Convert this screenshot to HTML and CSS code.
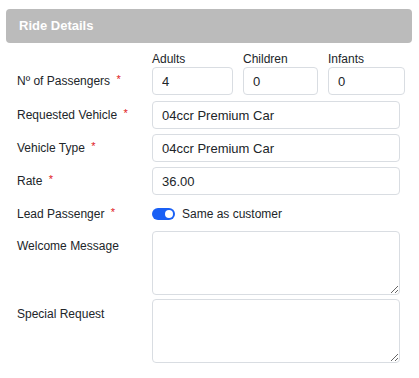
FILE: index.html
```html
<!DOCTYPE html>
<html lang="en">
<head>
    <meta charset="UTF-8">
    <title>Ride Details</title>
    <link rel="stylesheet" href="styles.css">
</head>
<body>
    <div class="panel">
        <div class="panel-header">Ride Details</div>
        <div class="form">
            <div class="row row-pax">
                <label class="field-label">Nº of Passengers <span class="req">*</span></label>
                <div class="pax">
                    <div class="pax-col">
                        <span class="pax-label">Adults</span>
                        <input class="input" type="text" value="4">
                    </div>
                    <div class="pax-col">
                        <span class="pax-label">Children</span>
                        <input class="input" type="text" value="0">
                    </div>
                    <div class="pax-col">
                        <span class="pax-label">Infants</span>
                        <input class="input" type="text" value="0">
                    </div>
                </div>
            </div>
            <div class="row">
                <label class="field-label">Requested Vehicle <span class="req">*</span></label>
                <input class="input" type="text" value="04ccr Premium Car">
            </div>
            <div class="row">
                <label class="field-label">Vehicle Type <span class="req">*</span></label>
                <input class="input" type="text" value="04ccr Premium Car">
            </div>
            <div class="row">
                <label class="field-label">Rate <span class="req">*</span></label>
                <input class="input" type="text" value="36.00">
            </div>
            <div class="row row-toggle">
                <label class="field-label">Lead Passenger <span class="req">*</span></label>
                <div class="toggle-wrap">
                    <span class="toggle"><span class="knob"></span></span>
                    <span>Same as customer</span>
                </div>
            </div>
            <div class="row row-top">
                <label class="field-label">Welcome Message</label>
                <textarea class="input textarea"></textarea>
            </div>
            <div class="row row-top">
                <label class="field-label">Special Request</label>
                <textarea class="input textarea"></textarea>
            </div>
        </div>
    </div>
</body>
</html>
```

FILE: styles.css
```css
body {
    margin: 0;
    padding: 9px 6px 0 6px;
    font-family: "Liberation Sans", Arial, sans-serif;
    font-size: 12px;
    color: #212529;
    background: #fff;
}
.panel {
    width: 406px;
}
.panel-header {
    background: #bbbbbb;
    color: #fff;
    font-weight: bold;
    font-size: 13px;
    height: 34px;
    line-height: 34px;
    padding-left: 13px;
    border-radius: 4px;
}
.form {
    padding: 9px 0 0 11px;
}
.row {
    display: grid;
    grid-template-columns: 135px 248px;
    align-items: center;
    margin-bottom: 5px;
}
.row-pax {
    align-items: end;
    margin-bottom: 6px;
}
.row-pax .field-label {
    height: 28px;
    line-height: 28px;
}
.row-top {
    align-items: start;
    margin-bottom: 4px;
}
.row-top .field-label {
    padding-top: 8px;
}
.field-label {
    white-space: nowrap;
}
.req {
    color: #e0161b;
    font-size: 11px;
    position: relative;
    top: -2px;
    margin-left: 3px;
}
.pax {
    display: grid;
    grid-template-columns: 81px 75px 77px;
    gap: 10px;
}
.pax-col {
    display: flex;
    flex-direction: column;
}
.pax-label {
    font-size: 12px;
    line-height: 14px;
    margin-bottom: 1px;
}
.input {
    box-sizing: border-box;
    height: 28px;
    width: 100%;
    border: 1px solid #d9dde2;
    border-radius: 4px;
    padding: 0 9px;
    font-family: inherit;
    font-size: 13px;
    color: #212529;
    background: #fff;
}
.textarea {
    height: 64px;
    resize: vertical;
    display: block;
}
.row-toggle {
    height: 27px;
    margin-bottom: 4px;
}
.toggle-wrap {
    display: flex;
    align-items: center;
    gap: 7px;
}
.toggle {
    display: inline-block;
    width: 23px;
    height: 12px;
    border-radius: 6px;
    background: #1a60f5;
    position: relative;
}
.knob {
    position: absolute;
    right: 2px;
    top: 2px;
    width: 8px;
    height: 8px;
    border-radius: 50%;
    background: #fff;
}
```
